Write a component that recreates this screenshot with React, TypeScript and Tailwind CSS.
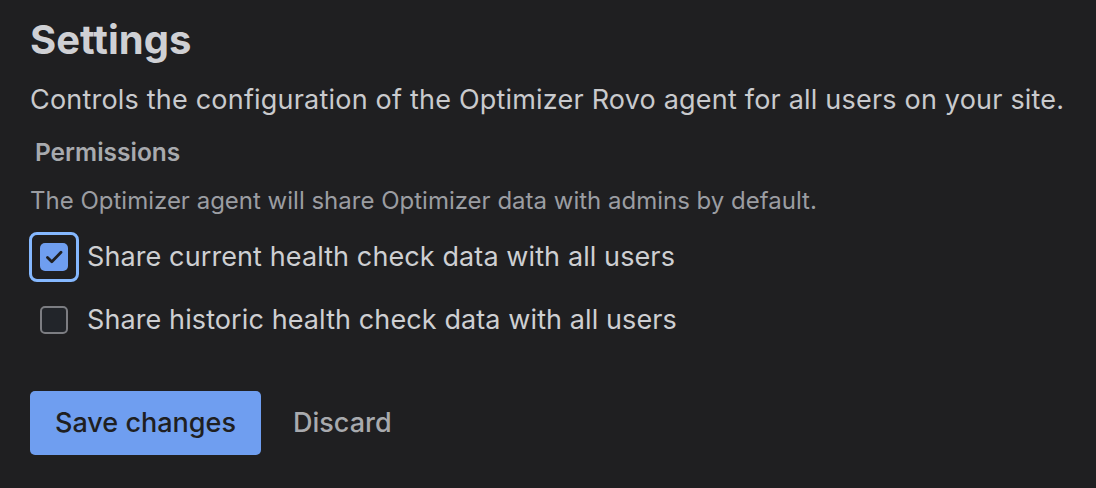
import React, { useState } from 'react';

const font = { fontFamily: 'Inter, "Noto Sans", sans-serif' };

const Checkbox: React.FC<{ checked: boolean; focused?: boolean; label: string; onToggle: () => void }> = ({ checked, focused, label, onToggle }) => (
    <label className="flex items-center gap-[19px] pl-[10px] cursor-pointer" onClick={onToggle}>
        <span
            className={`relative flex items-center justify-center shrink-0 w-[28px] h-[28px] rounded-[5px] ${
                checked ? 'bg-[#6f9ef0]' : 'bg-[#22252a] border-2 border-[#7c7d82]'
            }`}
        >
            {focused && <span className="absolute -inset-[11px] rounded-[8px] border-[3px] border-[#85b8ff]" />}
            {checked && (
                <svg width="28" height="28" viewBox="0 0 28 28" fill="none" className="shrink-0">
                    <path d="M7.5 14.5l4.3 4.3L21 9.3" stroke="#1f1f21" strokeWidth="2.8" strokeLinecap="round" strokeLinejoin="round" />
                </svg>
            )}
        </span>
        <span className="text-[27px] leading-[32px] tracking-[0.1px] text-[#cecfd2]">{label}</span>
    </label>
);

const App: React.FC = () => {
    const [current, setCurrent] = useState(true);
    const [historic, setHistoric] = useState(false);

    return (
        <div className="w-[1096px] h-[488px] bg-[#1f1f21] px-[30px] pt-[12px] overflow-hidden" style={font}>
            <h1 className="text-[40px] font-bold leading-[56px] text-[#cfd0d4]">Settings</h1>
            <p className="mt-[16px] text-[27px] leading-[32px] tracking-[0.2px] text-[#c9cacd]">
                Controls the configuration of the Optimizer Rovo agent for all users on your site.
            </p>
            <h2 className="mt-[22px] ml-[5px] text-[24.5px] font-semibold leading-[28px] text-[#a8aaae]">Permissions</h2>
            <p className="mt-[21px] text-[24px] leading-[28px] text-[#9b9da2]">
                The Optimizer agent will share Optimizer data with admins by default.
            </p>
            <div className="mt-[26px] flex flex-col gap-[31px]">
                <Checkbox checked={current} focused label="Share current health check data with all users" onToggle={() => setCurrent(v => !v)} />
                <Checkbox checked={historic} label="Share historic health check data with all users" onToggle={() => setHistoric(v => !v)} />
            </div>
            <div className="mt-[55px] flex items-center gap-[8px]">
                <button className="h-[64px] w-[231px] rounded-[5px] bg-[#6f9ef0] text-[27px] font-medium text-[#1f1f21]">
                    Save changes
                </button>
                <button className="h-[64px] px-[24px] rounded-[5px] text-[27px] font-medium text-[#a8aaae]">Discard</button>
            </div>
        </div>
    );
};

export default App;
